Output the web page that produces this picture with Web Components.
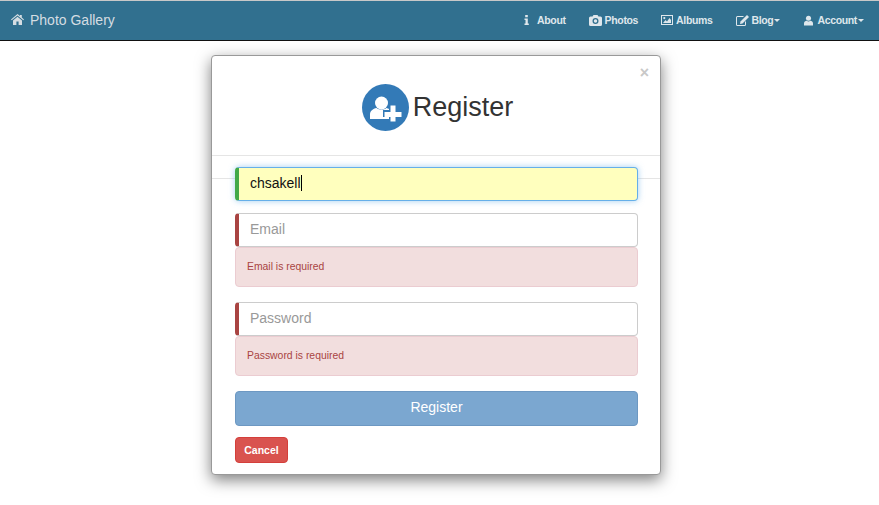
<!DOCTYPE html>
<html>
<head>
<meta charset="utf-8">
<title>Photo Gallery</title>
<style>
html, body { margin: 0; padding: 0; background: #fff; }
body { min-height: 505px; overflow: hidden; font-family: "Liberation Sans", Arial, sans-serif; font-size: 14px; color: #333; }
</style>
</head>
<body>
<app-navbar>
  <nav-item slot="brand" icon="home" gap="6" brand>Photo Gallery</nav-item>
  <nav-item icon="info" gap="8">About</nav-item>
  <nav-item icon="camera" gap="3">Photos</nav-item>
  <nav-item icon="picture" gap="3">Albums</nav-item>
  <nav-item icon="edit" gap="3" caret style="margin-right: 1px">Blog</nav-item>
  <nav-item icon="user" gap="4" caret>Account</nav-item>
</app-navbar>

<register-modal>
  <form-field state="valid" focused>chsakell</form-field>
  <form-field state="invalid" placeholder error="Email is required">Email</form-field>
  <form-field state="invalid" placeholder error="Password is required">Password</form-field>
</register-modal>

<script>
const icons = {
  home: '<svg width="13" height="11" viewBox="0 0 13 11"><path fill="currentColor" d="M6.500 0 0 5.400l.7.800L6.500 1.500l5.800 4.700.7-.8-2.200-1.800V1H9v1.100z"/><path fill="currentColor" d="M6.500 2.700 2 6.400V11h3.400V7.600h2.200V11H11V6.400z"/></svg>',
  info: '<svg width="5" height="10" viewBox="0 0 5 10"><path fill="currentColor" d="M1.200 0h2.600v2.200H1.200zM.5 3.400h3.300V8.500h1V10H.5V8.500h1V4.900h-1z"/></svg>',
  camera: '<svg width="13" height="11" viewBox="0 0 13 11"><path fill="currentColor" fill-rule="evenodd" d="M1.500 1.500h2L4.500 0h4l1 1.500h2A1.500 1.500 0 0 1 13 3v6.500a1.500 1.500 0 0 1-1.500 1.500h-10A1.500 1.500 0 0 1 0 9.500V3a1.500 1.500 0 0 1 1.500-1.500zM6.500 3a3 3 0 1 0 0 6 3 3 0 0 0 0-6zm0 1.300a1.700 1.700 0 1 1 0 3.400 1.700 1.700 0 0 1 0-3.400z"/></svg>',
  picture: '<svg width="12" height="10" viewBox="0 0 12 10"><path fill="currentColor" fill-rule="evenodd" d="M0 0h12v10H0zM1 1v8h10V1zM2 8l2.500-3 1.500 1.400L8.500 3 10 5v3zM3.300 2a1.100 1.100 0 1 1 0 2.200 1.100 1.100 0 0 1 0-2.200z"/></svg>',
  edit: '<svg width="13" height="11" viewBox="0 0 13 11"><path fill="currentColor" d="M1.500 1H8L7 2H1.500a.5.500 0 0 0-.5.500v7a.5.500 0 0 0 .5.500h7a.5.500 0 0 0 .5-.5V7l1-1v3.500A1.500 1.500 0 0 1 8.500 11h-7A1.500 1.500 0 0 1 0 9.500v-7A1.500 1.500 0 0 1 1.500 1z"/><path fill="currentColor" d="M11 0l2 2-6.500 6.500L4 9l.5-2.500z"/></svg>',
  user: '<svg width="9" height="11" viewBox="0 0 10 11"><circle fill="currentColor" cx="5" cy="3" r="2.800"/><path fill="currentColor" d="M0 11V8.800C0 7 1.500 6 3 5.800c.6.500 1.300.7 2 .7s1.400-.2 2-.7C8.500 6 10 7 10 8.800V11z"/></svg>'
};

class NavItem extends HTMLElement {
  constructor() {
    super();
    this.attachShadow({ mode: "open" });
    const brand = this.hasAttribute("brand");
    const caret = this.hasAttribute("caret") ? '<span class="caret"></span>' : "";
    this.shadowRoot.innerHTML = `
      <style>
        :host { display: flex; align-items: center; box-sizing: border-box; height: 39px; padding-bottom: ${brand ? "2px" : "1px"}; color: ${brand ? "#d5dde2" : "#dfe7ec"}; cursor: pointer; }
        .icon { display: flex; align-items: center; justify-content: center; margin-right: ${this.getAttribute("gap")}px; }
        .label { font-size: ${brand ? "14px" : "10.500px"}; letter-spacing: ${brand ? "0" : "-.35px"}; font-weight: ${brand ? "normal" : "bold"}; }
        .caret { width: 0; height: 0; margin-left: 1px; border-top: 3px solid; border-left: 3px solid transparent; border-right: 3px solid transparent; }
      </style>
      <span class="icon">${icons[this.getAttribute("icon")]}</span>
      <span class="label"><slot></slot></span>${caret}`;
  }
}
customElements.define("nav-item", NavItem);

class AppNavbar extends HTMLElement {
  constructor() {
    super();
    this.attachShadow({ mode: "open" });
    this.shadowRoot.innerHTML = `
      <style>
        :host { display: flex; justify-content: space-between; height: 39px; padding: 0 15px 0 11px;
                background: #31708f; border-top: 1px solid #c8c8c8; border-bottom: 1px solid #111; }
        .links { display: flex; gap: 23px; }
      </style>
      <slot name="brand"></slot>
      <div class="links"><slot></slot></div>`;
  }
}
customElements.define("app-navbar", AppNavbar);

class FormField extends HTMLElement {
  constructor() {
    super();
    this.attachShadow({ mode: "open" });
    const valid = this.getAttribute("state") === "valid";
    const focused = this.hasAttribute("focused");
    const error = this.getAttribute("error");
    const ph = this.hasAttribute("placeholder");
    this.shadowRoot.innerHTML = `
      <style>
        :host { display: block; margin-bottom: ${error ? "15px" : "12px"}; position: relative; }
        .input { box-sizing: border-box; height: 34px; display: flex; align-items: center; padding: 0 0 2px 11px;
                 font-size: 14px; color: ${ph ? "#999" : "#111"};
                 background: ${focused ? "#ffffbe" : "#fff"};
                 border: 1px solid ${focused ? "#66afe9" : "#ccc"};
                 border-left: 4px solid ${valid ? "#42a948" : "#a94442"};
                 border-radius: 4px;
                 box-shadow: ${focused ? "0 0 6px rgba(102,175,233,.6)" : "none"}; }
        .caret { display: ${focused ? "inline-block" : "none"}; width: 1px; height: 16px; background: #000; }
        .error { box-sizing: border-box; height: 40px; display: ${error ? "flex" : "none"}; align-items: center; padding: 0 0 2px 11px;
                 font-size: 10.400px; color: #a94442; background: #f2dede; border: 1px solid #ebccd1; border-radius: 4px; }
      </style>
      <div class="input"><span><slot></slot></span><span class="caret"></span></div>
      <div class="error">${error || ""}</div>`;
  }
}
customElements.define("form-field", FormField);

class RegisterModal extends HTMLElement {
  constructor() {
    super();
    this.attachShadow({ mode: "open" });
    this.shadowRoot.innerHTML = `
      <style>
        :host { display: block; box-sizing: border-box; width: 450px; height: 420px; margin: 14px 0 0 211px; position: relative;
                background: #fff; border: 1px solid #999; border-radius: 4px; box-shadow: 0 5px 15px rgba(0,0,0,.5);
                font-family: "Liberation Sans", Arial, sans-serif; }
        header { box-sizing: border-box; height: 100px; border-bottom: 1px solid #e5e5e5; display: flex; align-items: flex-start; justify-content: center; padding: 28px 0 0 3px; position: relative; }
        .close { position: absolute; top: 8px; right: 11px; font-size: 16px; line-height: 17px; font-weight: bold; color: #c8c8c8; }
        .badge { width: 47px; height: 47px; }
        h1 { margin: 0 0 0 4px; font-size: 27px; font-weight: normal; line-height: 46px; color: #333; }
        .rule { position: absolute; left: 0; right: 0; top: 122px; height: 1px; background: #e5e5e5; }
        .body { position: relative; padding: 11px 22px 0 23px; }
        button { display: block; font-family: inherit; color: #fff; border-radius: 4px; cursor: pointer; padding: 0; }
        .submit { width: 100%; height: 35px; font-size: 14px; padding-bottom: 3px; background: #7ba7d0; border: 1px solid #6d98c2; margin-bottom: 11px; }
        .cancel { width: 53px; height: 26px; font-size: 10.500px; font-weight: bold; background: #d9534f; border: 1px solid #d43f3a; }
      </style>
      <header>
        <span class="close">×</span>
        <svg class="badge" viewBox="0 0 47 47">
          <circle cx="23.500" cy="23.500" r="23.500" fill="#337ab7"/>
          <circle cx="19.500" cy="19" r="6.500" fill="#fff"/>
          <path fill="#fff" d="M8 35v-4.500c0-3.500 3-5.700 6.500-6.500 1.500 1 3 1.500 5 1.500s3.500-.5 5-1.500c2 .5 3.500 1.300 4.500 2.500V35z"/>
          <path fill="#337ab7" d="M27 20h8v6h6v7h-6v5h-8v-5h-6v-7h6z"/>
          <path fill="#fff" d="M28.500 21.500h5v6.500h6v5h-6v4.500h-5V33h-6v-5h6z"/>
        </svg>
        <h1>Register</h1>
      </header>
      <div class="rule"></div>
      <div class="body">
        <slot></slot>
        <button class="submit">Register</button>
        <button class="cancel">Cancel</button>
      </div>`;
  }
}
customElements.define("register-modal", RegisterModal);
</script>
</body>
</html>
